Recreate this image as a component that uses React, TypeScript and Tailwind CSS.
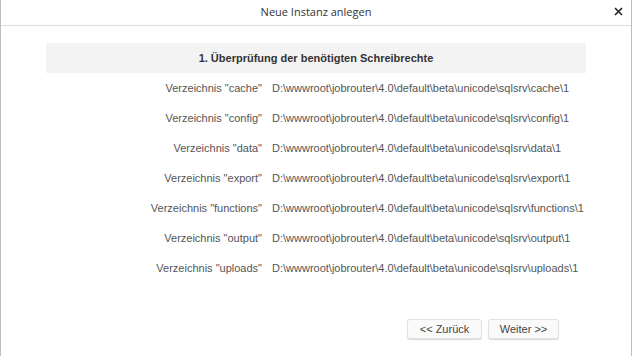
import React from "react";

// Directories to check for write permissions
const dirs = ["cache", "config", "data", "export", "functions", "output", "uploads"];
const basePath = "D:\\wwwroot\\jobrouter\\4.0\\default\\beta\\unicode\\sqlsrv\\";

export default function App() {
  return (
    <div className="w-[632px] h-[356px] bg-white border-x border-[#bdbdbd] flex flex-col font-['Liberation_Sans',Arial,sans-serif]">
      {/* Header */}
      <div className="relative h-[26px] border-b border-[#dcdcdc] flex items-center justify-center">
        <span className="font-['Open_Sans',sans-serif] text-[11px] text-[#333]">Neue Instanz anlegen</span>
        <svg className="absolute left-[613px] top-[7px]" width="9" height="9" viewBox="0 0 9 9">
          <path d="M1 1 L8 8 M8 1 L1 8" stroke="#222" strokeWidth="1.6" />
        </svg>
      </div>

      {/* Body */}
      <div className="mx-[45px] mt-[17px]">
        <div className="h-[30px] bg-[#f3f3f3] flex items-center justify-center text-[11px] font-bold text-[#333]">
          1. Überprüfung der benötigten Schreibrechte
        </div>
        {dirs.map((d) => (
          <div key={d} className="h-[30px] flex items-center text-[11px] text-[#555]">
            <div className="w-[216px] text-right whitespace-nowrap">Verzeichnis "{d}"</div>
            <div className="ml-[10px] whitespace-nowrap">{basePath + d}\1</div>
          </div>
        ))}
      </div>

      {/* Buttons */}
      <div className="flex justify-end gap-[6px] pr-[72px] mt-[36px]">
        <button className="w-[75px] h-[20px] rounded-[3px] border border-[#e2e2e2] bg-[#fafafa] shadow-[0_1px_1px_rgba(0,0,0,0.15)] text-[11px] text-[#444]">
          &lt;&lt; Zurück
        </button>
        <button className="w-[71px] h-[20px] rounded-[3px] border border-[#e2e2e2] bg-[#fafafa] shadow-[0_1px_1px_rgba(0,0,0,0.15)] text-[11px] text-[#444]">
          Weiter &gt;&gt;
        </button>
      </div>
    </div>
  );
}
